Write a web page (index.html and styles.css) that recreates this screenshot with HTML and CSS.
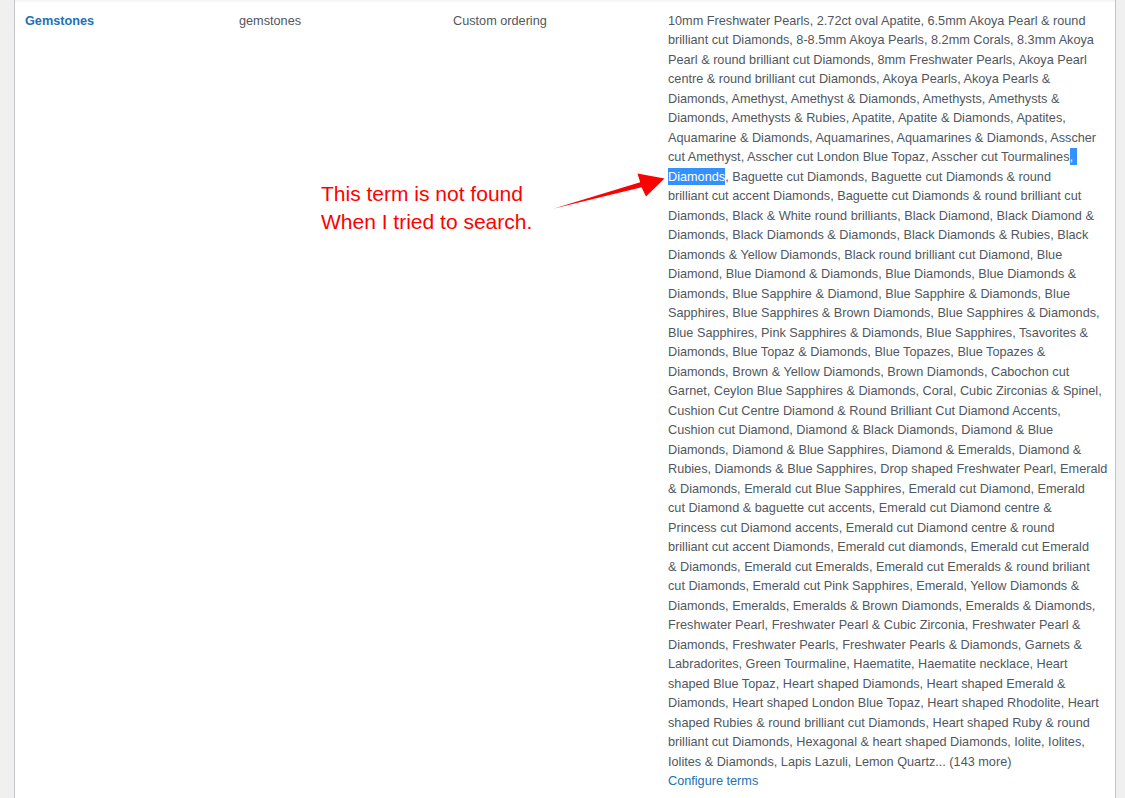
FILE: index.html
```html
<!DOCTYPE html>
<html lang="en">
<head>
<meta charset="utf-8">
<title>Attributes</title>
<link rel="stylesheet" href="styles.css">
</head>
<body>
<div class="table">
  <div class="prev-row"></div>
  <div class="row">
    <div class="cell"><strong><a class="name" href="#">Gemstones</a></strong></div>
    <div class="cell">gemstones</div>
    <div class="cell">Custom ordering</div>
    <div class="cell terms">10mm Freshwater Pearls, 2.72ct oval Apatite, 6.5mm Akoya Pearl &amp; round<br>brilliant cut Diamonds, 8-8.5mm Akoya Pearls, 8.2mm Corals, 8.3mm Akoya<br>Pearl &amp; round brilliant cut Diamonds, 8mm Freshwater Pearls, Akoya Pearl<br>centre &amp; round brilliant cut Diamonds, Akoya Pearls, Akoya Pearls &amp;<br>Diamonds, Amethyst, Amethyst &amp; Diamonds, Amethysts, Amethysts &amp;<br>Diamonds, Amethysts &amp; Rubies, Apatite, Apatite &amp; Diamonds, Apatites,<br>Aquamarine &amp; Diamonds, Aquamarines, Aquamarines &amp; Diamonds, Asscher<br>cut Amethyst, Asscher cut London Blue Topaz, Asscher cut Tourmalines<span class="sel">,&nbsp;</span><br><span class="sel">Diamonds</span>, Baguette cut Diamonds, Baguette cut Diamonds &amp; round<br>brilliant cut accent Diamonds, Baguette cut Diamonds &amp; round brilliant cut<br>Diamonds, Black &amp; White round brilliants, Black Diamond, Black Diamond &amp;<br>Diamonds, Black Diamonds &amp; Diamonds, Black Diamonds &amp; Rubies, Black<br>Diamonds &amp; Yellow Diamonds, Black round brilliant cut Diamond, Blue<br>Diamond, Blue Diamond &amp; Diamonds, Blue Diamonds, Blue Diamonds &amp;<br>Diamonds, Blue Sapphire &amp; Diamond, Blue Sapphire &amp; Diamonds, Blue<br>Sapphires, Blue Sapphires &amp; Brown Diamonds, Blue Sapphires &amp; Diamonds,<br>Blue Sapphires, Pink Sapphires &amp; Diamonds, Blue Sapphires, Tsavorites &amp;<br>Diamonds, Blue Topaz &amp; Diamonds, Blue Topazes, Blue Topazes &amp;<br>Diamonds, Brown &amp; Yellow Diamonds, Brown Diamonds, Cabochon cut<br>Garnet, Ceylon Blue Sapphires &amp; Diamonds, Coral, Cubic Zirconias &amp; Spinel,<br>Cushion Cut Centre Diamond &amp; Round Brilliant Cut Diamond Accents,<br>Cushion cut Diamond, Diamond &amp; Black Diamonds, Diamond &amp; Blue<br>Diamonds, Diamond &amp; Blue Sapphires, Diamond &amp; Emeralds, Diamond &amp;<br>Rubies, Diamonds &amp; Blue Sapphires, Drop shaped Freshwater Pearl, Emerald<br>&amp; Diamonds, Emerald cut Blue Sapphires, Emerald cut Diamond, Emerald<br>cut Diamond &amp; baguette cut accents, Emerald cut Diamond centre &amp;<br>Princess cut Diamond accents, Emerald cut Diamond centre &amp; round<br>brilliant cut accent Diamonds, Emerald cut diamonds, Emerald cut Emerald<br>&amp; Diamonds, Emerald cut Emeralds, Emerald cut Emeralds &amp; round briliant<br>cut Diamonds, Emerald cut Pink Sapphires, Emerald, Yellow Diamonds &amp;<br>Diamonds, Emeralds, Emeralds &amp; Brown Diamonds, Emeralds &amp; Diamonds,<br>Freshwater Pearl, Freshwater Pearl &amp; Cubic Zirconia, Freshwater Pearl &amp;<br>Diamonds, Freshwater Pearls, Freshwater Pearls &amp; Diamonds, Garnets &amp;<br>Labradorites, Green Tourmaline, Haematite, Haematite necklace, Heart<br>shaped Blue Topaz, Heart shaped Diamonds, Heart shaped Emerald &amp;<br>Diamonds, Heart shaped London Blue Topaz, Heart shaped Rhodolite, Heart<br>shaped Rubies &amp; round brilliant cut Diamonds, Heart shaped Ruby &amp; round<br>brilliant cut Diamonds, Hexagonal &amp; heart shaped Diamonds, Iolite, Iolites,<br>Iolites &amp; Diamonds, Lapis Lazuli, Lemon Quartz... (143 more)<br><a class="configure" href="#">Configure terms</a></div>
  </div>
</div>

<div class="note">This term is not found<br>When I tried to search.</div>
<svg class="arrow" width="1125" height="798" viewBox="0 0 1125 798" aria-hidden="true">
  <polygon points="554,208.5 640.2,182.2 637.5,173.5 664.5,178.5 646,196.5 641.6,187.2" fill="#ff0000"/>
</svg>
</body>
</html>
```

FILE: styles.css
```css
html, body {
  margin: 0;
  padding: 0;
}

body {
  background: #f0f0f1;
  font-family: "Liberation Sans", Arial, sans-serif;
  font-size: 12.7px;
  line-height: 19.5px;
  color: #50575e;
  height: 798px;
  overflow: hidden;
  position: relative;
}

.table {
  margin-left: 14px;
  width: 1102px;
  box-sizing: border-box;
  border-left: 1px solid #c3c4c7;
  border-right: 1px solid #c3c4c7;
  background: #fff;
  min-height: 798px;
}

.prev-row {
  height: 2px;
  background: #f6f7f7;
}

.row {
  display: grid;
  grid-template-columns: 214px 214px 215px 1fr;
}

.cell {
  padding: 9.5px 10px 8px;
}

.terms {
  white-space: nowrap;
}

.name {
  color: #2271b1;
  text-decoration: none;
  font-weight: 600;
}

.configure {
  color: #2271b1;
  text-decoration: none;
}

.sel {
  background: #3390ff;
  color: #fff;
  padding: 2px 0 1px;
}

.note {
  position: absolute;
  left: 321px;
  top: 180px;
  font-family: "Liberation Sans", Arial, sans-serif;
  font-size: 21px;
  line-height: 28px;
  color: #ff0000;
}

.arrow {
  position: absolute;
  left: 0;
  top: 0;
}
```
